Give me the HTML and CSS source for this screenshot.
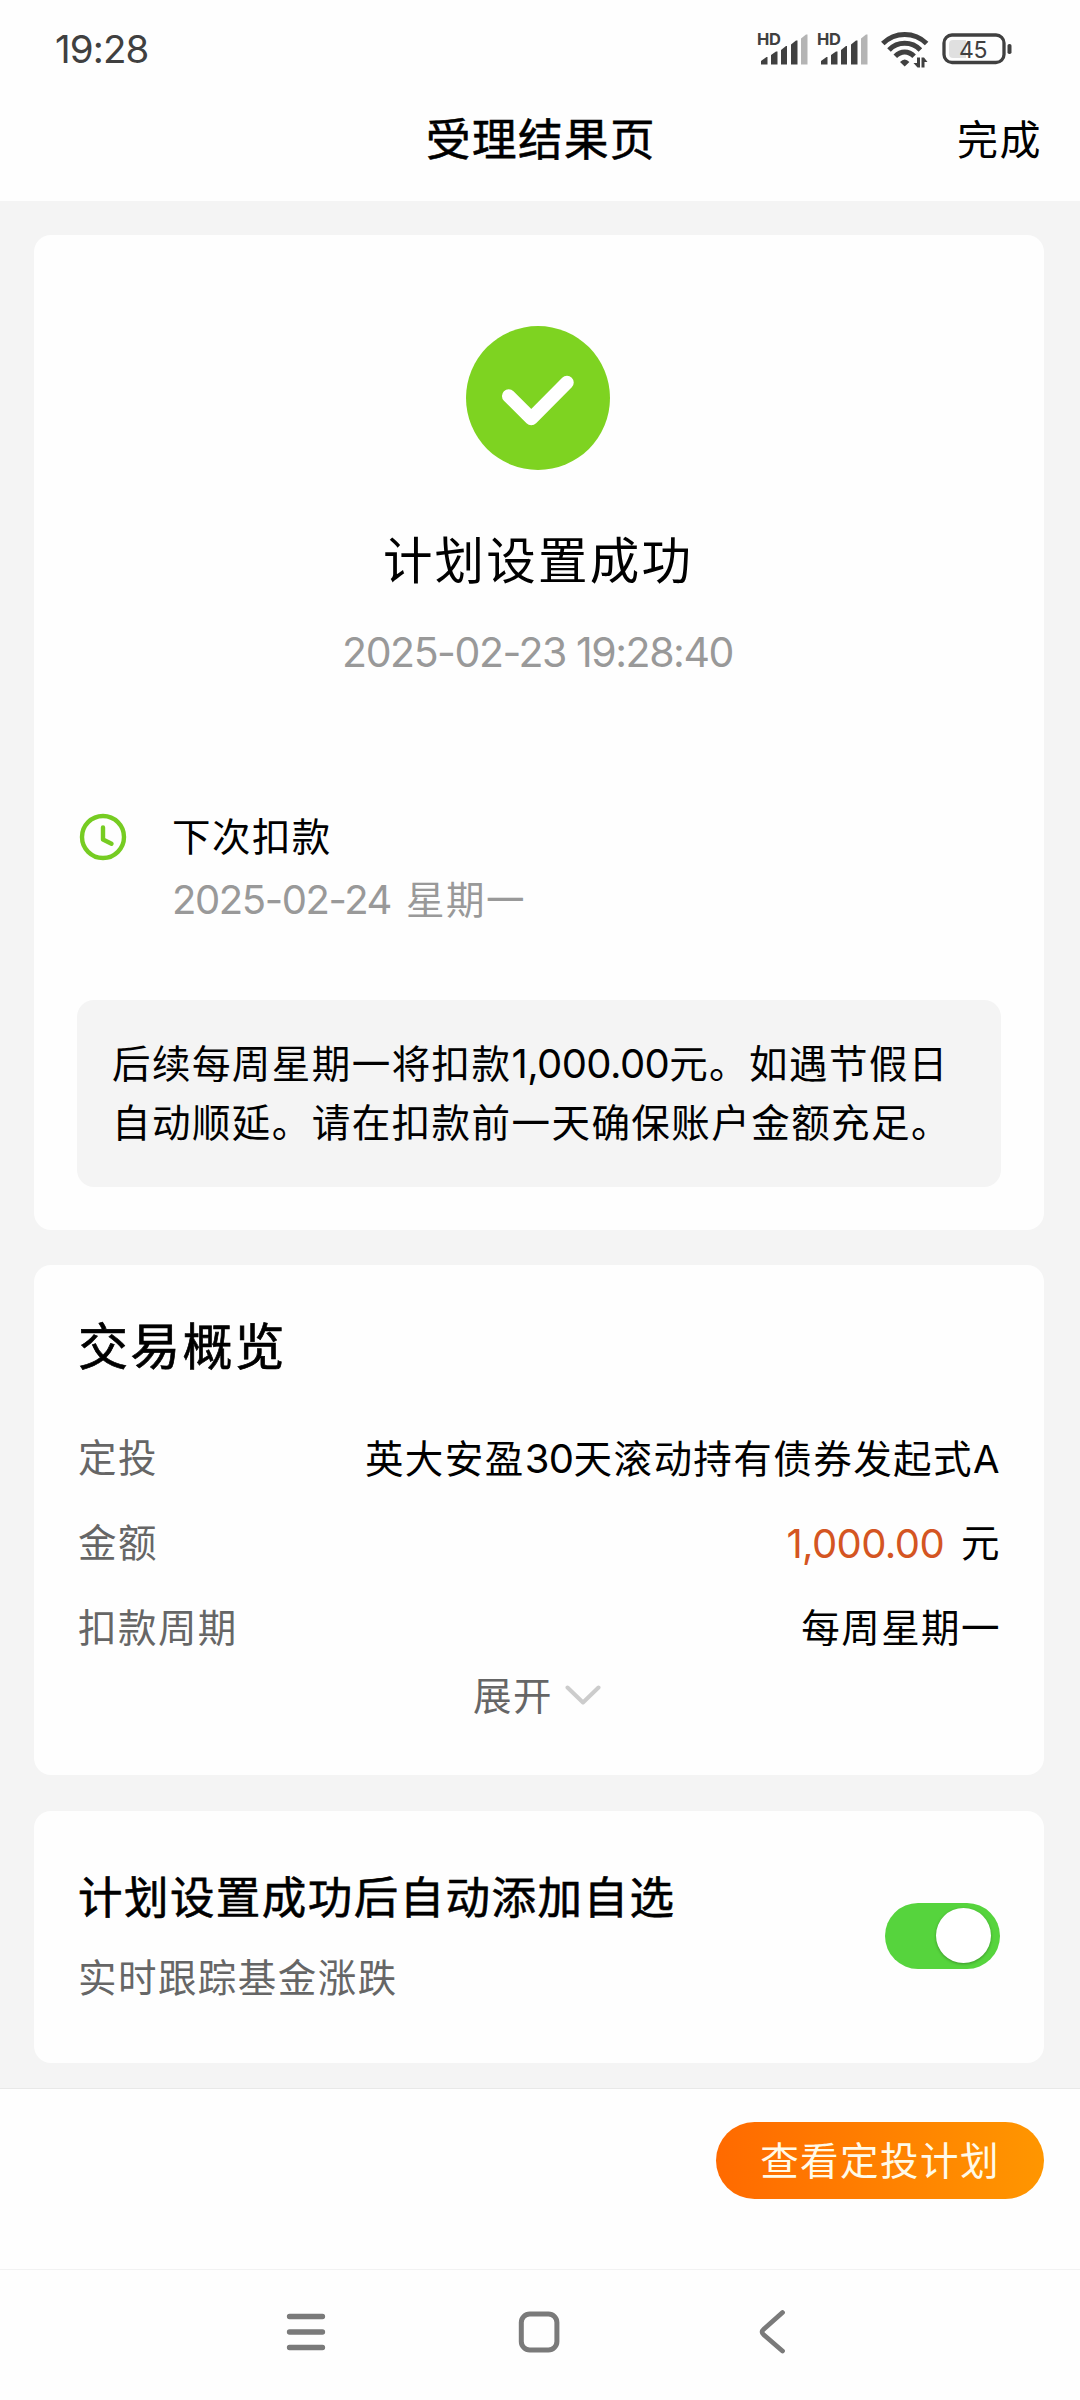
FILE: index.html
```html
<!DOCTYPE html>
<html lang="zh-CN">
<head>
<meta charset="utf-8">
<title>受理结果页</title>
<link rel="stylesheet" href="styles.css">
</head>
<body>
<div class="screen">
  <div class="statusbar">
    <span class="clock-text">19:28</span>
    <div class="status-icons">
      <svg class="signal" width="52" height="36" viewBox="0 0 52 36">
        <text class="hd" x="-1" y="15">HD</text>
        <path fill="#404040" d="M3 34.500v-3.500l5.500-4h1v7.500zM13 34.500v-9.500l5-3.500h1.500v13zM23 34.500v-14.500l5-4h1v18.500zM33 34.500v-20l5-4h1.500v24z"/>
        <path fill="#b4b4b4" d="M43 34.500v-26l5-4h1.500v30z"/>
      </svg>
      <svg class="signal" width="52" height="36" viewBox="0 0 52 36">
        <text class="hd" x="-1" y="15">HD</text>
        <path fill="#404040" d="M3 34.500v-3.500l5.500-4h1v7.500zM13 34.500v-9.500l5-3.500h1.500v13zM23 34.500v-14.500l5-4h1v18.500zM33 34.500v-20l5-4h1.500v24z"/>
        <path fill="#b4b4b4" d="M43 34.500v-26l5-4h1.500v30z"/>
      </svg>
      <svg class="wifi" width="48" height="38" viewBox="0 0 48 38">
        <g fill="none" stroke="#404040" stroke-width="5">
          <path d="M1.800 13.500Q11 4.500 23.700 4.500T45.600 13.500"/>
          <path d="M8 20Q14.500 13.300 23.700 13.300T39.400 20"/>
          <path d="M14.300 26.300Q18.500 22 23.700 22T33.100 26.300"/>
        </g>
        <path fill="#404040" d="M19 32q4.700-5 9.400 0l-4.700 4.500zM36 27.500h3v10h-2.500l-4-4.500h3.500zM40.500 37.500v-10h2.500l3.500 4.500h-3v5.500z"/>
      </svg>
      <svg class="battery" width="72" height="32" viewBox="0 0 72 32">
        <rect x="2" y="2" width="60" height="27.500" rx="8" fill="none" stroke="#404040" stroke-width="3.300"/>
        <path fill="#e0e0e0" d="M11 7h13v18h-13q-4 0-4-4v-10q0-4 4-4z"/>
        <rect x="65.500" y="11" width="4" height="10" rx="1.800" fill="#404040"/>
        <text class="level" x="31" y="24.500" text-anchor="middle">45</text>
      </svg>
    </div>
  </div>
  <header class="header">
    <h1 class="header-title">受理结果页</h1>
    <a class="header-done">完成</a>
  </header>
  <main class="content">
    <section class="card result">
      <svg class="check" width="144" height="144" viewBox="0 0 144 144">
        <circle cx="72" cy="72" r="72" fill="#7ed321"/>
        <path d="M42.700 70L65.300 92.600L101 56.500" fill="none" stroke="#fff" stroke-width="13.500" stroke-linecap="round" stroke-linejoin="round"/>
      </svg>
      <h2 class="result-title">计划设置成功</h2>
      <p class="result-time">2025-02-23 19:28:40</p>
      <div class="next">
        <svg class="next-icon" width="48" height="48" viewBox="0 0 48 48">
          <g fill="none" stroke="#76cc22" stroke-width="4.400" stroke-linecap="round" stroke-linejoin="round">
            <circle cx="24" cy="24" r="21"/>
            <path d="M24 14.500V26.500L32.500 30.800"/>
          </g>
        </svg>
        <div class="next-body">
          <p class="next-title">下次扣款</p>
          <p class="next-date"><span class="date">2025-02-24</span><span>星期一</span></p>
        </div>
      </div>
      <div class="notice">后续每周星期一将扣款<span class="num">1,000.00</span>元。如遇节假日<br>自动顺延。请在扣款前一天确保账户金额充足。</div>
    </section>
    <section class="card overview">
      <h2 class="overview-title">交易概览</h2>
      <div class="row"><span class="label">定投</span><span class="value">英大安盈<span class="num">30</span>天滚动持有债券发起式A</span></div>
      <div class="row"><span class="label">金额</span><span class="value amount"><span class="num price">1,000.00</span><span>元</span></span></div>
      <div class="row"><span class="label">扣款周期</span><span class="value">每周星期一</span></div>
      <div class="expand">
        <span>展开</span>
        <svg width="36" height="22" viewBox="0 0 36 22"><path d="M2.500 2.500L18 17.500L33.500 2.500" fill="none" stroke="#ccc" stroke-width="4" stroke-linecap="round" stroke-linejoin="round"/></svg>
      </div>
    </section>
    <section class="card favorite">
      <div class="favorite-text">
        <h3 class="favorite-title">计划设置成功后自动添加自选</h3>
        <p class="favorite-sub">实时跟踪基金涨跌</p>
      </div>
      <div class="toggle"><div class="knob"></div></div>
    </section>
  </main>
  <footer class="footer">
    <a class="button">查看定投计划</a>
  </footer>
  <nav class="sysnav">
    <svg width="46" height="46" viewBox="0 0 46 46"><path d="M6.500 7.500H39.500M6.500 23H39.500M6.500 38.500H39.500" stroke="#7a7a7a" stroke-width="5.300" stroke-linecap="round"/></svg>
    <svg width="46" height="46" viewBox="0 0 46 46"><rect x="5.300" y="5" width="35.600" height="36" rx="8.500" fill="none" stroke="#7a7a7a" stroke-width="5"/></svg>
    <svg width="46" height="46" viewBox="0 0 46 46"><path d="M33.500 3.500L14.700 20.200Q11.500 23 14.700 25.800L33.500 42" fill="none" stroke="#7a7a7a" stroke-width="4.800" stroke-linecap="round" stroke-linejoin="round"/></svg>
  </nav>
</div>
</body>
</html>
```
FILE: styles.css
```css
* { box-sizing: border-box; }
body, h1, h2, h3, p { margin: 0; font-weight: 400; }
svg { display: block; flex: none; }

body {
  width: 1080px;
  background: #fefefe;
  color: #000;
  font-family: Inter, "Noto Sans CJK SC", sans-serif;
  font-size: 38.500px;
  letter-spacing: 1.450px;
}

.screen {
  display: flex;
  flex-direction: column;
  height: 2400px;
}

.statusbar {
  display: flex;
  justify-content: space-between;
  height: 100px;
  padding: 30px 66px 0 55px;
  color: #404040;
}
.clock-text {
  font-size: 38.500px;
  line-height: 38px;
  letter-spacing: -.900px;
}
.status-icons { display: flex; }
.signal { margin-right: 8px; overflow: visible; }
.wifi { margin: 0 13px 0 3px; }
.battery { margin-top: 3px; }
.hd {
  fill: #404040;
  font: 700 16.500px Inter, sans-serif;
  letter-spacing: -.3px;
}
.level {
  fill: #404040;
  font: 400 23px Inter, sans-serif;
  letter-spacing: -.5px;
}

.header {
  display: grid;
  grid-template-columns: 1fr auto 1fr;
  align-items: center;
  height: 101px;
  padding: 0 38px 21px 40px;
}
.header-title {
  grid-column: 2;
  font-size: 44.500px;
  line-height: 60px;
  -webkit-text-stroke: .6px #000;
}
.header-done {
  justify-self: end;
  font-size: 41px;
  line-height: 60px;
}

.content {
  display: flex;
  flex-direction: column;
  flex: none;
  height: 1887px;
  padding: 34px 36px 0 34px;
  background: #f4f4f4;
}
.card {
  border-radius: 17px;
  background: #fefefe;
}

.result {
  display: flex;
  flex-direction: column;
  align-items: center;
  height: 995px;
  margin-bottom: 35px;
  padding: 91px 43px 0;
}
.check { margin-right: 2px; }
.result-title {
  margin: 61px 2px 0 0;
  font-size: 49.500px;
  line-height: 60px;
  letter-spacing: 2.200px;
}
.result-time {
  margin: 37px 3px 0 0;
  color: #999;
  font-size: 41px;
  line-height: 48px;
  letter-spacing: -1.450px;
}
.next {
  display: flex;
  align-self: stretch;
  margin-top: 137px;
}
.next-icon { margin-left: 2px; }
.next-body { margin-left: 45px; }
.next-title { line-height: 48px; }
.next-date {
  display: flex;
  gap: 15px;
  margin-top: 15px;
  color: #999;
  line-height: 48px;
}
.date {
  font-size: 40px;
  letter-spacing: -1.400px;
}
.num {
  font-size: 40px;
  letter-spacing: -.600px;
}
.notice {
  align-self: stretch;
  height: 187px;
  margin-top: 76px;
  padding: 34px 0 0 35px;
  border-radius: 17px;
  background: #f4f4f4;
  line-height: 59px;
  white-space: nowrap;
}

.overview {
  height: 510px;
  margin-bottom: 36px;
  padding: 52px 43px 0 44px;
}
.overview-title {
  margin-bottom: 39px;
  font-size: 50px;
  line-height: 60px;
  letter-spacing: 2.200px;
  -webkit-text-stroke: .7px #000;
}
.row {
  display: flex;
  justify-content: space-between;
  height: 85px;
  line-height: 85px;
}
.label { color: #666; }
.value { white-space: nowrap; }
.amount { display: flex; gap: 17px; }
.price { color: #d45522; }
.expand {
  display: flex;
  align-items: center;
  justify-content: center;
  gap: 12px;
  height: 50px;
  padding-right: 5px;
  color: #666;
  line-height: 50px;
}

.favorite {
  display: flex;
  align-items: center;
  justify-content: space-between;
  height: 252px;
  padding: 0 44px;
}
.favorite-title {
  font-size: 44.500px;
  line-height: 60px;
  -webkit-text-stroke: .6px #000;
}
.favorite-sub {
  margin-top: 22px;
  color: #666;
  line-height: 56px;
}
.toggle {
  display: flex;
  justify-content: flex-end;
  width: 115px;
  height: 66px;
  margin-bottom: 2px;
  padding: 5px 9px;
  border-radius: 33px;
  background: #56d43d;
}
.knob {
  width: 55px;
  height: 55px;
  border-radius: 50%;
  background: #fff;
  box-shadow: 0 1px 3px rgba(0, 0, 0, .3);
}

.footer {
  display: flex;
  align-items: flex-start;
  justify-content: flex-end;
  height: 181px;
  padding: 33px 36px 0 0;
  border-top: 1px solid #e8e8e8;
}
.button {
  width: 328px;
  height: 77px;
  border-radius: 39px;
  background: linear-gradient(90deg, #ff6a00, #ff9600);
  color: #fffae8;
  line-height: 78px;
  text-align: center;
}

.sysnav {
  display: flex;
  justify-content: center;
  gap: 187px;
  height: 131px;
  padding: 39px 2px 0 0;
  border-top: 1px solid #f2f2f2;
}
```
